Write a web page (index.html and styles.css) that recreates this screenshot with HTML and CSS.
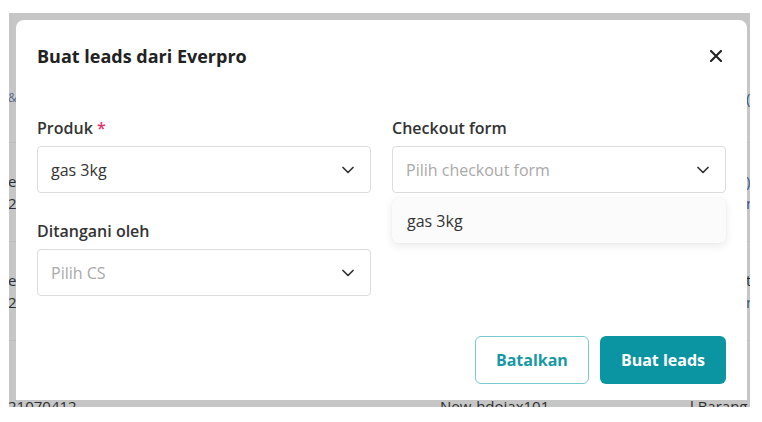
FILE: index.html
```html
<!DOCTYPE html>
<html lang="id">
<head>
  <meta charset="UTF-8" />
  <title>Buat leads dari Everpro</title>
  <link rel="stylesheet" href="styles.css">
</head>
<body>
  <div class="screen">
    <div class="table">
      <div class="row row-head">
        <span class="cell cell-a icon-cell">&amp;</span>
        <span class="cell cell-c link">(</span>
      </div>
      <div class="row">
        <div class="cell cell-a"><div>e</div><div>2</div></div>
        <div class="cell cell-c"><div class="link">)</div><div class="link">n</div></div>
      </div>
      <div class="row">
        <div class="cell cell-a"><div>e</div><div>2</div></div>
        <div class="cell cell-c"><div>t</div><div class="link">n</div></div>
      </div>
      <div class="row row-last">
        <div class="cell cell-a">21070412</div>
        <div class="cell cell-b">New-hdoiax101</div>
        <div class="cell cell-d">l Barang</div>
      </div>
    </div>

    <div class="modal">
      <div class="modal-header">
        <h2>Buat leads dari Everpro</h2>
        <button class="close-button" aria-label="Tutup">
          <svg width="12" height="12" viewBox="0 0 12 12">
            <path d="M1 1 L11 11 M11 1 L1 11" stroke="#222" stroke-width="2.1" stroke-linecap="round" fill="none"/>
          </svg>
        </button>
      </div>

      <div class="form-grid">
        <div class="field">
          <label>Produk <span class="required">*</span></label>
          <div class="select">
            <span class="value">gas 3kg</span>
            <svg class="chevron" width="12" height="8" viewBox="0 0 12 8">
              <polyline points="1,1.5 6,6.5 11,1.5" stroke="#333" stroke-width="1.7" fill="none" stroke-linecap="round" stroke-linejoin="round"/>
            </svg>
          </div>
        </div>

        <div class="field">
          <label>Checkout form</label>
          <div class="select">
            <span class="placeholder">Pilih checkout form</span>
            <svg class="chevron" width="12" height="8" viewBox="0 0 12 8">
              <polyline points="1,1.5 6,6.5 11,1.5" stroke="#333" stroke-width="1.7" fill="none" stroke-linecap="round" stroke-linejoin="round"/>
            </svg>
          </div>
          <div class="dropdown">
            <div class="option">gas 3kg</div>
          </div>
        </div>

        <div class="field">
          <label>Ditangani oleh</label>
          <div class="select">
            <span class="placeholder">Pilih CS</span>
            <svg class="chevron" width="12" height="8" viewBox="0 0 12 8">
              <polyline points="1,1.5 6,6.5 11,1.5" stroke="#333" stroke-width="1.7" fill="none" stroke-linecap="round" stroke-linejoin="round"/>
            </svg>
          </div>
        </div>
      </div>

      <div class="actions">
        <button class="btn btn-outline">Batalkan</button>
        <button class="btn btn-primary">Buat leads</button>
      </div>
    </div>
  </div>
</body>
</html>
```

FILE: styles.css
```css
body {
  margin: 0;
  padding: 13px 0 0 9px;
  background: #fff;
  font-family: "Open Sans", "Noto Sans", sans-serif;
}

.screen {
  position: relative;
  width: 741px;
  height: 394px;
  background: #c6c6c6;
  overflow: hidden;
}

/* table behind the overlay */
.table {
  color: #2e2e2e;
  font-size: 15px;
  line-height: 22px;
}

.row {
  position: relative;
  height: 98px;
  border-bottom: 1px solid #bdbdbd;
}

.row-head {
  height: 129px;
}

.row-last {
  border-bottom: none;
}

.cell {
  position: absolute;
  top: 27px;
}

.cell-a { left: -1px; }
.cell-b { left: 431px; }
.cell-c { left: 737px; }
.cell-d { left: 681px; }

.row-head .cell { top: 74px; }
.row-last .cell { top: 54px; }

.link { color: #35588a; }
.icon-cell { color: #5a6d8c; font-size: 12px; }

/* modal */
.modal {
  position: absolute;
  left: 7px;
  top: 7px;
  width: 731px;
  height: 380px;
  box-sizing: border-box;
  padding: 24px 21px 0;
  background: #fff;
  border-radius: 8px 8px 0 0;
}

.modal-header {
  display: flex;
  justify-content: space-between;
  align-items: center;
}

.modal-header h2 {
  margin: 0;
  font-size: 18px;
  line-height: 24px;
  font-weight: 700;
  color: #222;
}

.close-button {
  display: flex;
  padding: 0;
  margin-right: 4px;
  border: none;
  background: none;
  cursor: pointer;
}

.form-grid {
  display: grid;
  grid-template-columns: 1fr 1fr;
  column-gap: 21px;
  row-gap: 28px;
  margin-top: 50px;
}

.field {
  position: relative;
}

.field label {
  display: block;
  margin-bottom: 8px;
  font-size: 16px;
  line-height: 20px;
  font-weight: 600;
  color: #333;
}

.required {
  color: #e5336a;
}

.select {
  display: flex;
  align-items: center;
  justify-content: space-between;
  height: 47px;
  box-sizing: border-box;
  padding: 0 16px 0 13px;
  border: 1px solid #dcdcdc;
  border-radius: 4px;
  font-size: 16px;
  color: #333;
}

.placeholder {
  color: #a9a9a9;
}

.dropdown {
  position: absolute;
  left: 0;
  right: 0;
  top: calc(100% + 5px);
  height: 45px;
  display: flex;
  align-items: center;
  background: #fbfbfc;
  border-radius: 6px;
  box-shadow: 0 3px 10px rgba(0, 0, 0, 0.09), 0 0 1px rgba(0, 0, 0, 0.08);
}

.option {
  padding-left: 15px;
  font-size: 16px;
  color: #333;
}

.actions {
  display: flex;
  justify-content: flex-end;
  gap: 11px;
  margin-top: 40px;
}

.btn {
  height: 48px;
  box-sizing: border-box;
  border-radius: 6px;
  font-family: inherit;
  font-size: 16px;
  font-weight: 700;
  cursor: pointer;
}

.btn-outline {
  padding: 0 20px;
  background: #fff;
  border: 1.5px solid #76c9cf;
  color: #1898a4;
}

.btn-primary {
  padding: 0 21px;
  background: #0b94a1;
  border: none;
  color: #fff;
}
```
